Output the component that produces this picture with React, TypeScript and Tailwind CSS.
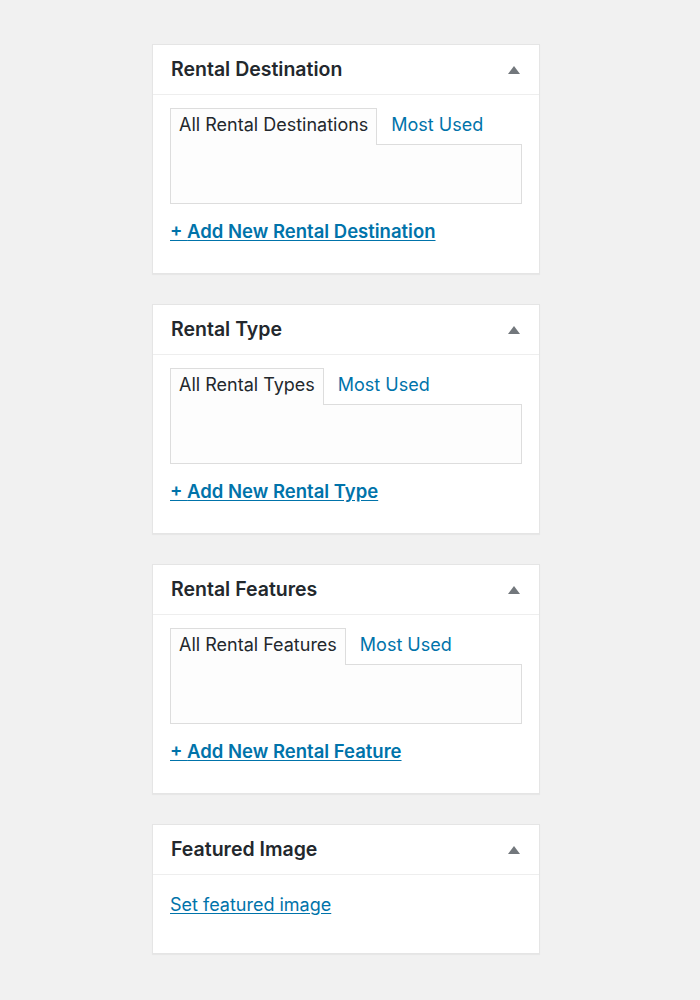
import React from "react";

const font = { fontFamily: "Inter, 'Noto Sans', sans-serif" };

/* ── Collapse arrow ── */
function Arrow() {
  return (
    <svg width="12" height="8" viewBox="0 0 12 8" className="text-[#72777c]">
      <path d="M6 0 L12 8 L0 8 Z" fill="currentColor" />
    </svg>
  );
}

function PanelHeader({ title }: { title: string }) {
  return (
    <div className="flex h-[50px] items-center justify-between border-b border-[#eeeeee] pl-[18px] pr-[19px]">
      <h2 className="text-[19.5px] font-semibold text-[#23282d]">{title}</h2>
      <Arrow />
    </div>
  );
}

function TaxonomyBox({ title, allLabel, addLabel }: { title: string; allLabel: string; addLabel: string }) {
  return (
    <div className="border border-[#e5e5e5] bg-white shadow-[0_1px_1px_rgba(0,0,0,0.04)]">
      <PanelHeader title={title} />
      <div className="h-[178px] px-[17px] pt-[13px]">
        <div className="flex items-end">
          <div className="relative z-10 -mb-px flex h-[37px] items-center border border-b-0 border-[#dddddd] bg-[#fdfdfd] pb-[5px] pl-[8px] pr-[8px] text-[18px] text-[#23282d]">
            {allLabel}
          </div>
          <div className="flex h-[36px] items-center pb-[4px] pl-[14px] text-[18px] text-[#0073aa]">Most Used</div>
        </div>
        <div className="h-[60px] border border-[#dddddd] bg-[#fdfdfd]" />
        <a href="#" className="mt-[14px] inline-block text-[18.5px] font-semibold text-[#0073aa] underline underline-offset-2">
          + {addLabel}
        </a>
      </div>
    </div>
  );
}

export default function App() {
  return (
    <div className="min-h-[1000px] bg-[#f1f1f1] pl-[152px] pt-[44px]" style={font}>
      <div className="flex w-[388px] flex-col gap-[30px]">
        <TaxonomyBox title="Rental Destination" allLabel="All Rental Destinations" addLabel="Add New Rental Destination" />
        <TaxonomyBox title="Rental Type" allLabel="All Rental Types" addLabel="Add New Rental Type" />
        <TaxonomyBox title="Rental Features" allLabel="All Rental Features" addLabel="Add New Rental Feature" />

        {/* Featured image */}
        <div className="border border-[#e5e5e5] bg-white shadow-[0_1px_1px_rgba(0,0,0,0.04)]">
          <PanelHeader title="Featured Image" />
          <div className="h-[78px] px-[17px] pt-[16px]">
            <a href="#" className="text-[18px] text-[#0073aa] underline underline-offset-2">
              Set featured image
            </a>
          </div>
        </div>
      </div>
    </div>
  );
}
